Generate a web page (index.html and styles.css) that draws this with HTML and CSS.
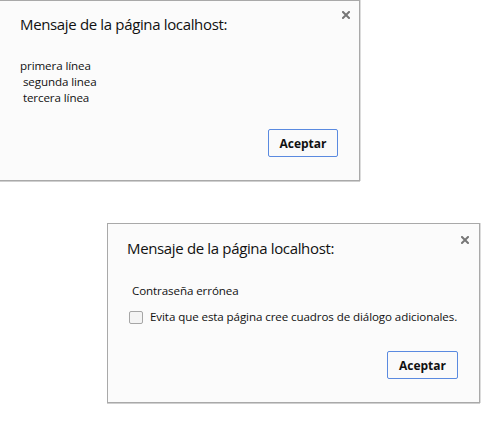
FILE: index.html
```html
<!DOCTYPE html>
<html lang="es">
<head>
<meta charset="utf-8">
<title>Mensaje</title>
<link rel="stylesheet" href="styles.css">
</head>
<body>
<div class="desk">
  <div class="dialog d1">
    <div class="title">Mensaje de la página localhost:</div>
    <button class="close" aria-label="Cerrar"><svg width="8" height="8" viewBox="0 0 8 8"><path d="M1 1L7 7M7 1L1 7" stroke="#777" stroke-width="2" stroke-linecap="square"/></svg></button>
    <div class="msg">primera línea
 segunda linea
 tercera línea</div>
    <div class="footer"><button class="ok">Aceptar</button></div>
  </div>

  <div class="dialog d2">
    <div class="title">Mensaje de la página localhost:</div>
    <button class="close" aria-label="Cerrar"><svg width="8" height="8" viewBox="0 0 8 8"><path d="M1 1L7 7M7 1L1 7" stroke="#777" stroke-width="2" stroke-linecap="square"/></svg></button>
    <div class="msg">Contraseña errónea</div>
    <label class="check"><span class="box"></span>Evita que esta página cree cuadros de diálogo adicionales.</label>
    <div class="footer"><button class="ok">Aceptar</button></div>
  </div>
</div>
</body>
</html>
```

FILE: styles.css
```css
html, body {
  margin: 0;
  padding: 0;
  background: #ffffff;
}
.desk {
  position: relative;
  width: 492px;
  height: 428px;
  overflow: hidden;
  font-family: "Open Sans", "Noto Sans", sans-serif;
  color: #111;
}
.dialog {
  position: absolute;
  box-sizing: content-box;
  display: flex;
  flex-direction: column;
  background: #fbfbfb;
  border: 1px solid #a9a9a9;
  box-shadow: 0 1px 0 #cfcfcf, 1px 0 0 #dcdcdc;
}
.d1 {
  left: -1px;
  top: 0;
  width: 359px;
  height: 179px;
}
.d2 {
  left: 107px;
  top: 223px;
  width: 371px;
  height: 178px;
}
.title {
  font-size: 15px;
  letter-spacing: -0.35px;
  line-height: 20px;
  color: #111;
  margin-top: 13px;
}
.d1 .title { padding-left: 20px; }
.d2 .title { padding-left: 19px; margin-top: 14px; }
.close {
  position: absolute;
  padding: 0;
  margin: 0;
  border: 0;
  background: none;
  width: 8px;
  height: 8px;
  display: block;
}
.close svg { display: block; }
.d1 .close { right: 9px; top: 10px; }
.d2 .close { right: 10px; top: 12px; }
.msg {
  font-size: 11.6px;
  letter-spacing: -0.1px;
  line-height: 16px;
  white-space: pre;
  color: #111;
}
.d1 .msg { padding-left: 20px; margin-top: 24px; }
.d2 .msg { padding-left: 24px; margin-top: 25px; }
.check {
  display: flex;
  align-items: center;
  font-size: 11.6px;
  letter-spacing: -0.1px;
  line-height: 16px;
  color: #111;
  margin-top: 10px;
  padding-left: 21px;
}
.box {
  width: 12px;
  height: 11px;
  border: 1px solid #a6a6a6;
  border-radius: 2px;
  background: #f4f4f4;
  margin-right: 7px;
}
.footer {
  margin-top: auto;
  display: flex;
  justify-content: flex-end;
}
.d1 .footer { padding: 0 21px 23px 0; }
.d2 .footer { padding: 0 21px 23px 0; }
.ok {
  box-sizing: border-box;
  height: 28px;
  width: 70px;
  padding: 0;
  border: 1px solid #5a8ae0;
  border-radius: 2px;
  background: #fafafa;
  font-family: "Open Sans", "Noto Sans", sans-serif;
  font-weight: 700;
  font-size: 12px;
  color: #111;
}
.d2 .ok { width: 71px; }
```
